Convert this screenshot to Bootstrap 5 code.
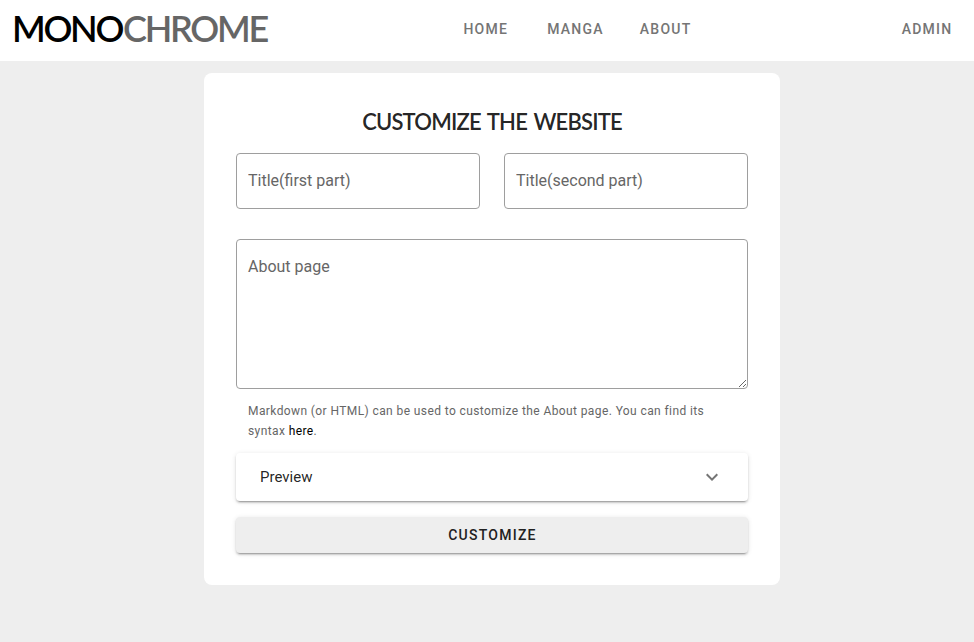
<!DOCTYPE html>
<html lang="en">
<head>
<meta charset="utf-8">
<meta name="viewport" content="width=device-width, initial-scale=1">
<title>Monochrome</title>
<link rel="stylesheet" href="https://cdn.jsdelivr.net/npm/bootstrap@5.3.0/dist/css/bootstrap.min.css">
<style>
body{font-family:Roboto,sans-serif;background:#eee;color:rgba(0,0,0,.87);letter-spacing:0;overflow:hidden}
.topbar{height:61px;padding:0 21.5px 0 12px;display:grid;grid-template-columns:451.4px auto 1fr}
.brand-name{font:600 36px/56px Lato,sans-serif;letter-spacing:-2.3px;color:#000;text-decoration:none;white-space:nowrap}
.brand-name .brand-second{color:#666;margin-left:1px;letter-spacing:-2.3px}
.topbar .nav-link{font-size:14px;line-height:20px;font-weight:500;letter-spacing:1.25px;color:#757575;padding:0;margin-top:19px}
.topbar .nav-manga{margin-left:39px;margin-right:36px}
.panel{width:576px;height:512px;margin:12px 0 0 204px;border-radius:8px;padding:32px}
.panel h1{font:600 22px/32px Lato,sans-serif;margin:0;padding:1px 0 15px;letter-spacing:-.82px;word-spacing:2px}
.panel .form-control{border:1px solid #9e9e9e;border-radius:4px;font-size:16px;line-height:24px;padding:15px 11px;background:#fff}
.panel input.form-control{height:56px;padding-bottom:17px}
.panel textarea.form-control{height:150px;resize:vertical;display:block}
.panel .form-control::placeholder{color:#666;opacity:1}
.fields{gap:24px;margin-bottom:30px}
.hint{font-size:12px;line-height:20px;letter-spacing:.4px;color:#666;margin:12px 12px 12px}
.hint a{color:#000;text-decoration:none}
.raised{border-radius:4px;box-shadow:0 3px 1px -2px rgba(0,0,0,.2),0 2px 2px 0 rgba(0,0,0,.14),0 1px 5px 0 rgba(0,0,0,.12)}
.preview{height:48px;padding:0 24px;font-size:15px;margin-bottom:16px;background:#fff;border:0;color:inherit}
.submit{height:36px;padding:0 0 0 1px;font-size:14px;font-weight:500;letter-spacing:1.25px;background:#eee;color:#212121;border:0}
</style>
<script src="https://cdn.jsdelivr.net/npm/bootstrap@5.3.0/dist/js/bootstrap.bundle.min.js"></script>
</head>
<body>
<header class="topbar bg-white">
  <a class="brand-name" href="#">MONO<span class="brand-second">CHROME</span></a>
  <nav class="nav flex-nowrap">
    <a class="nav-link" href="#">HOME</a>
    <a class="nav-link nav-manga" href="#">MANGA</a>
    <a class="nav-link" href="#">ABOUT</a>
  </nav>
  <nav class="nav justify-content-end"><a class="nav-link" href="#">ADMIN</a></nav>
</header>
<main class="panel bg-white">
  <h1 class="text-center">CUSTOMIZE THE WEBSITE</h1>
  <form>
    <div class="fields d-flex">
      <input class="form-control" type="text" placeholder="Title(first part)">
      <input class="form-control" type="text" placeholder="Title(second part)">
    </div>
    <textarea class="form-control" placeholder="About page"></textarea>
    <p class="hint">Markdown (or HTML) can be used to customize the About page. You can find its syntax <a href="#">here</a>.</p>
    <button type="button" class="raised preview w-100 d-flex align-items-center justify-content-between">
      Preview
      <svg width="24" height="24" viewBox="0 0 24 24" fill="#757575"><path d="M7.41 8.59 12 13.17l4.59-4.58L18 10l-6 6-6-6z"/></svg>
    </button>
    <button type="button" class="btn raised submit w-100 d-block">CUSTOMIZE</button>
  </form>
</main>
</body>
</html>
